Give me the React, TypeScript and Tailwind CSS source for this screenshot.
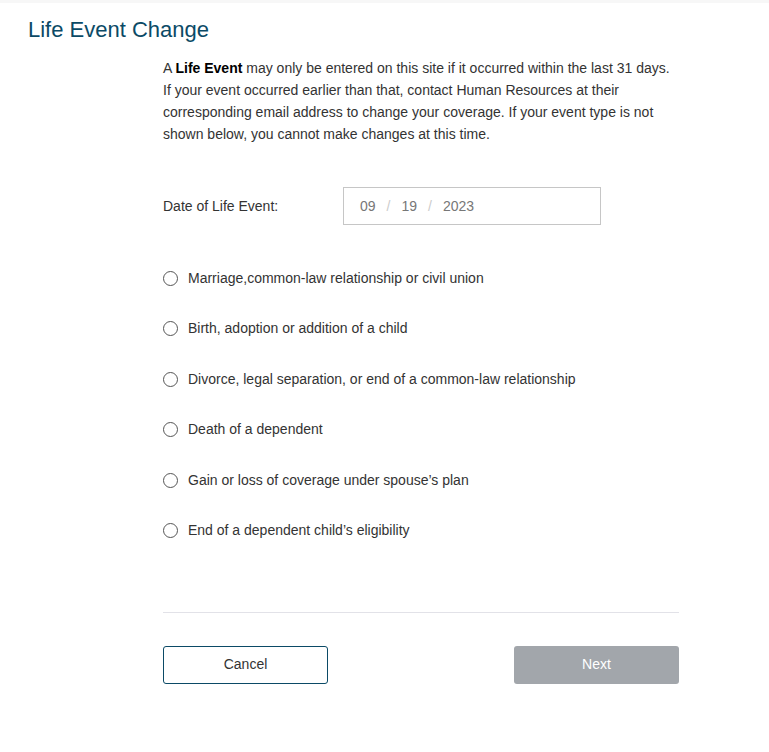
import { useState } from "react";

const events = [
  "Marriage,common-law relationship or civil union",
  "Birth, adoption or addition of a child",
  "Divorce, legal separation, or end of a common-law relationship",
  "Death of a dependent",
  "Gain or loss of coverage under spouse\u2019s plan",
  "End of a dependent child\u2019s eligibility",
];

export default function App() {
  const [selected, setSelected] = useState<number | null>(null);

  return (
    <div className="min-h-screen w-full bg-white font-['Liberation_Sans',Arial,sans-serif] text-[#333]">
      <div className="h-[3px] w-full bg-[#f7f7f7]" />
      <h1 className="pl-[28px] pt-[13px] text-[22px] leading-[28px] text-[#0b4a66]">
        Life Event Change
      </h1>

      <div className="ml-[163px] w-[516px]">
        <p className="mt-[13px] text-[14px] leading-[22px] text-[#333]">
          A <b className="text-black">Life Event</b> may only be entered on this site if it occurred within the last 31 days.
          <br />
          If your event occurred earlier than that, contact Human Resources at their
          <br />
          corresponding email address to change your coverage. If your event type is not
          <br />
          shown below, you cannot make changes at this time.
        </p>

        <div className="mt-[42px] flex items-center">
          <label className="w-[180px] text-[14px] text-[#333]">Date of Life Event:</label>
          <div className="flex h-[38px] w-[258px] items-center border border-[#c6c6c6] pl-[16px] text-[14px] text-[#777]">
            <span>09</span>
            <span className="mx-[11px] text-[#ccc]">/</span>
            <span>19</span>
            <span className="mx-[11px] text-[#ccc]">/</span>
            <span>2023</span>
          </div>
        </div>

        <div className="mt-[43px] flex flex-col gap-[30.5px]">
          {events.map((ev, i) => (
            <label key={ev} className="flex h-[20px] cursor-pointer items-center gap-[10px] text-[14px] text-[#333]">
              <span
                onClick={() => setSelected(i)}
                className="flex h-[15px] w-[15px] items-center justify-center rounded-full border border-[#555]"
              >
                {selected === i && <span className="h-[7px] w-[7px] rounded-full bg-[#0b4a66]" />}
              </span>
              {ev}
            </label>
          ))}
        </div>

        <div className="mt-[71px] h-px w-full bg-[#e2e2e8]" />

        <div className="mt-[33px] flex justify-between">
          <button className="h-[38px] w-[165px] rounded-[3px] border border-[#0b4a66] bg-white text-[14px] text-[#333]">
            Cancel
          </button>
          <button disabled className="h-[38px] w-[165px] rounded-[3px] bg-[#a2a6ab] text-[14px] text-white">
            Next
          </button>
        </div>
      </div>
    </div>
  );
}
